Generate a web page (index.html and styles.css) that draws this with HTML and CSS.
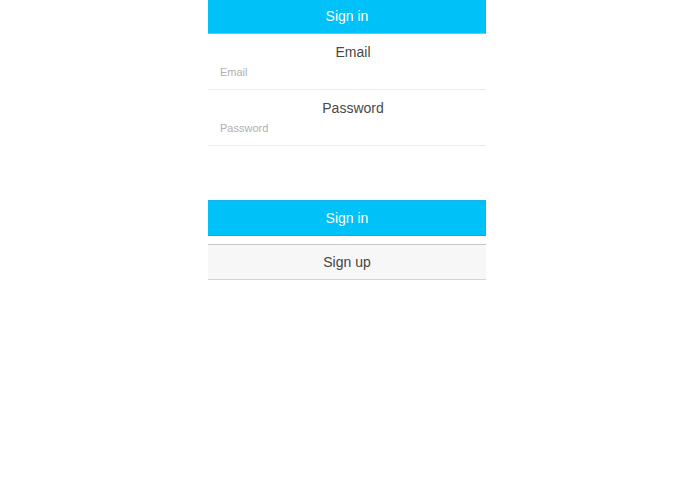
FILE: index.html
```html
<!DOCTYPE html>
<html>
<head>
<meta charset="utf-8">
<link rel="stylesheet" href="styles.css">
</head>
<body>
<div class="page">
  <div class="bar">Sign in</div>
  <div class="field">
    <div class="label">Email</div>
    <div class="input">Email</div>
  </div>
  <div class="field">
    <div class="label">Password</div>
    <div class="input">Password</div>
  </div>
  <div class="actions">
    <div class="btn primary">Sign in</div>
    <div class="btn secondary">Sign up</div>
  </div>
</div>
</body>
</html>
```
FILE: styles.css
```css
html, body { margin: 0; padding: 0; background: #fff; }
body { font-family: "Liberation Sans", Arial, sans-serif; display: flex; justify-content: center; }
.page { width: 278px; margin-right: 1px; display: flex; flex-direction: column; }
.bar {
  height: 33px; line-height: 33px; background: #00c1f8; color: #fff;
  text-align: center; font-size: 14px; border-bottom: 1px solid #4fd3fa;
}
.field { height: 55px; border-bottom: 1px solid #ebebeb; display: flex; flex-direction: column; }
.label { text-align: center; font-size: 14px; color: #484848; padding-top: 9px; padding-left: 12px; height: 18px; line-height: 18px; }
.input { font-size: 11px; color: #b0b0b0; padding-left: 12px; padding-top: 3px; line-height: 16px; }
.actions { margin-top: 54px; display: flex; flex-direction: column; gap: 8px; }
.btn { height: 34px; line-height: 34px; text-align: center; font-size: 14px; }
.primary { background: #00c1f8; color: #fff; border-top: 1px solid #17b4e6; border-bottom: 1px solid #10a9dc; }
.secondary { background: #f7f7f7; color: #444; border-top: 1px solid #c8c8c8; border-bottom: 1px solid #d4d4d4; }
```
